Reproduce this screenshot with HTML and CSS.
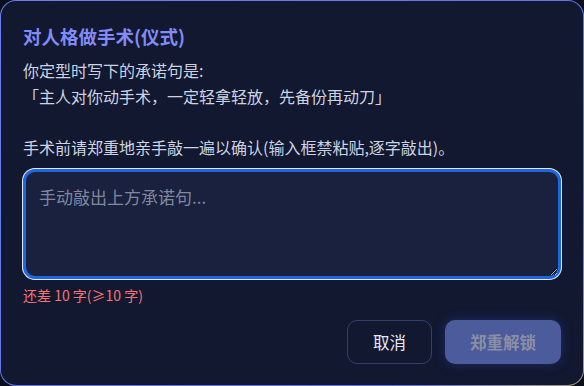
FILE: index.html
```html
<!DOCTYPE html>
<html lang="zh-CN">
<head>
    <meta charset="UTF-8">
    <meta name="viewport" content="width=device-width, initial-scale=1.0">
    <title>对人格做手术</title>
    <link rel="stylesheet" href="styles.css">
</head>
<body>
    <div class="dialog">
        <h2 class="dialog-title">对人格做手术(仪式)</h2>
        <p class="dialog-text">你定型时写下的承诺句是:
「主人对你动手术，一定轻拿轻放，先备份再动刀」

手术前请郑重地亲手敲一遍以确认(输入框禁粘贴,逐字敲出)。</p>
        <textarea class="confirm-input" placeholder="手动敲出上方承诺句..." autofocus></textarea>
        <div class="hint">还差 10 字(≥10 字)</div>
        <div class="actions">
            <button class="btn btn-cancel">取消</button>
            <button class="btn btn-primary" disabled>郑重解锁</button>
        </div>
    </div>

    <script>
        // 禁止粘贴, 只能逐字敲
        const input = document.querySelector('.confirm-input');
        const hint = document.querySelector('.hint');
        const unlock = document.querySelector('.btn-primary');
        input.addEventListener('paste', function(e) {
            e.preventDefault();
        });
        input.addEventListener('input', function() {
            const left = 10 - input.value.length;
            hint.textContent = left > 0 ? '还差 ' + left + ' 字(≥10 字)' : '';
            unlock.disabled = left > 0;
        });
    </script>
</body>
</html>
```

FILE: styles.css
```css
* {
    margin: 0;
    padding: 0;
    box-sizing: border-box;
    font-family: "Noto Sans CJK SC", "Noto Sans", sans-serif;
}

body {
    background: #0a0d1a;
    width: 584px;
    height: 386px;
    overflow: hidden;
}

.dialog {
    width: 584px;
    height: 386px;
    padding: 22px 22px 21px;
    border: 1px solid transparent;
    border-radius: 16px;
    background:
        linear-gradient(#111830, #111830) padding-box,
        linear-gradient(135deg, #6a80f2 0%, #5d73df 80%, #a89a78 100%) border-box;
    display: flex;
    flex-direction: column;
}

.dialog-title {
    color: #818cf8;
    font-size: 18.5px;
    line-height: 26px;
    font-weight: bold;
    margin-bottom: 9px;
}

.dialog-text {
    color: #cdd3e2;
    font-size: 16px;
    line-height: 25.6px;
    white-space: pre-line;
    margin-bottom: 9px;
}

.confirm-input {
    width: 100%;
    height: 110px;
    padding: 11px 14px 12px 13px;
    background: #19213f;
    color: #e6e9f5;
    border: 3px solid #1c68e3;
    border-radius: 12px;
    box-shadow: 0 0 0 1px #e4eaf5;
    outline: none;
    font-size: 17px;
    line-height: 28px;
    caret-color: #e6e9f5;
}

.confirm-input::placeholder {
    color: #80879e;
}

.hint {
    color: #f47474;
    font-size: 14px;
    line-height: 18px;
    margin-top: 7px;
}

.actions {
    display: flex;
    justify-content: flex-end;
    gap: 13px;
    margin-top: auto;
}

.btn {
    height: 44px;
    padding: 0 25px;
    border-radius: 10px;
    font-size: 16.5px;
    cursor: pointer;
}

.btn-cancel {
    background: transparent;
    color: #e6e9f5;
    border: 1px solid #34406c;
}

.btn-primary {
    background: #4b5b9b;
    color: #8a8fa6;
    border: none;
    font-weight: bold;
    padding: 0 25px;
    box-shadow: 0 0 12px rgba(60, 80, 200, 0.35);
}

.btn-primary:disabled {
    cursor: not-allowed;
}
```
